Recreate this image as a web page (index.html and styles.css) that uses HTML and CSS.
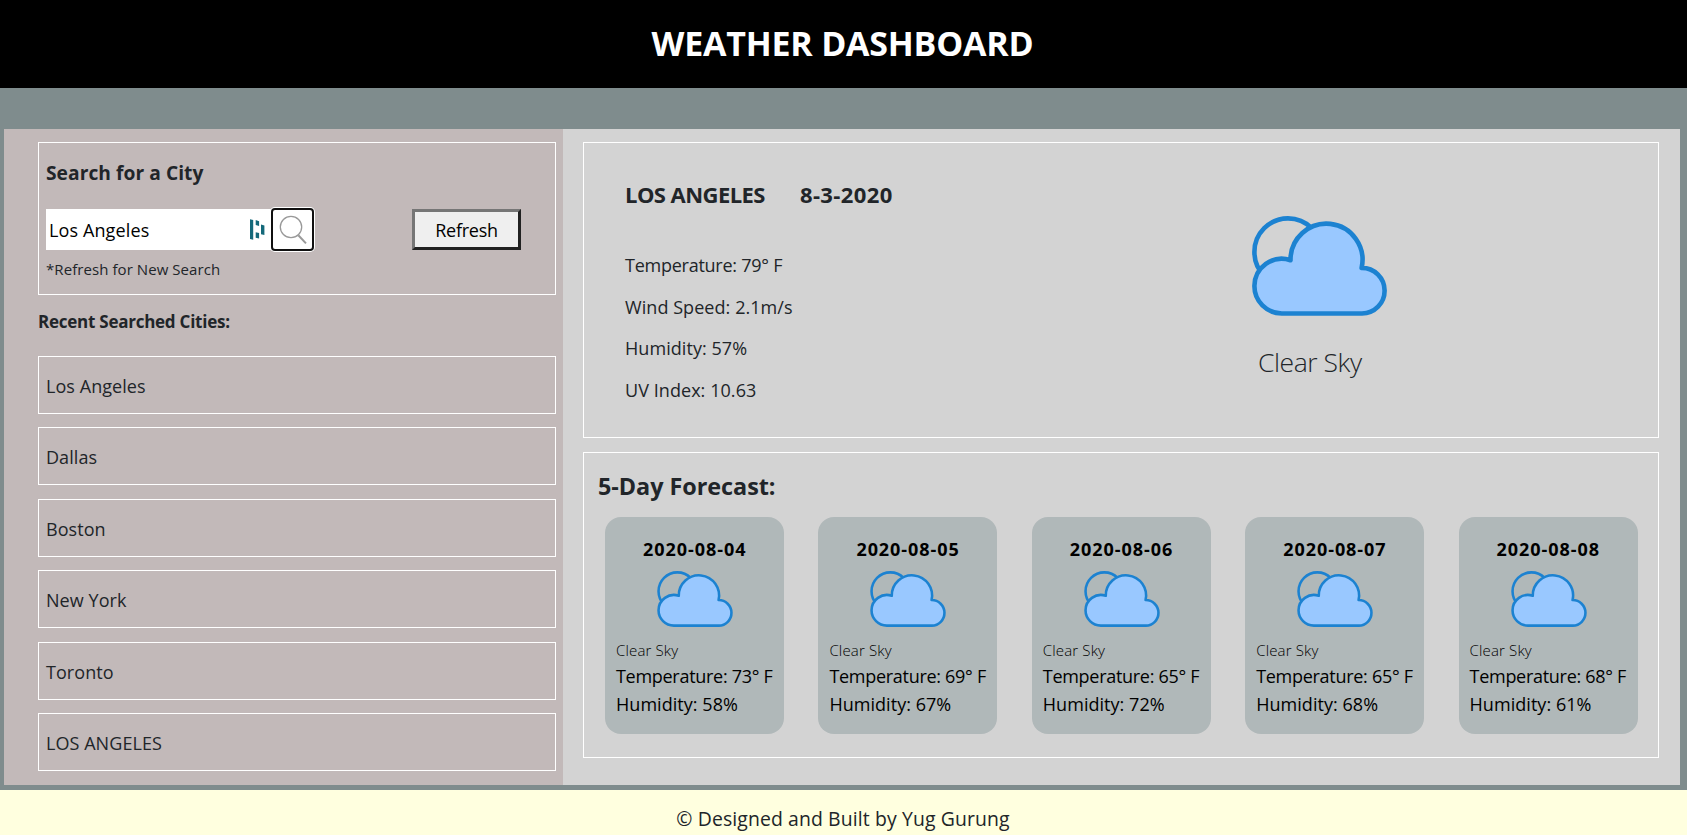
FILE: index.html
```html
<!DOCTYPE html>
<html lang="en">
<head>
<meta charset="utf-8">
<title>Weather Dashboard</title>
<link rel="stylesheet" href="styles.css">
</head>
<body>
<svg class="sprite" aria-hidden="true">
  <symbol id="cloud" viewBox="0 0 135 100">
    <circle cx="36" cy="36" r="33.6" fill="none" stroke="#1c82d1" stroke-width="4.6"/>
    <path d="M29.8 97.5A27.4 27.4 0 0 1 2.4 70.1A27.4 27.4 0 0 1 38.5 44.2A36 36.2 0 1 1 109.6 51.9A22.8 22.8 0 0 1 110 97.5Z" fill="#99c8ff" stroke="#1c82d1" stroke-width="4.6" stroke-linejoin="round"/>
  </symbol>
</svg>
<header class="header"><h1>WEATHER DASHBOARD</h1></header>
<main class="dashboard">
  <aside class="sidebar">
    <section class="search">
      <h2>Search for a City</h2>
      <div class="controls">
        <div class="field">
          <span>Los Angeles</span>
          <svg class="manager" viewBox="0 0 15 21"><path d="M0 .3 3.2 1v19.7L0 20zM5.7 1l3.4 1.2V7L5.7 6zM5.7 13.2l3.4.8v5.6l-3.4-.8zM11 5.4l3.4 1v9.6L11 15.3z" fill="#14697a"/></svg>
        </div>
        <button class="lens" aria-label="Search"><svg viewBox="0 0 32 32" fill="none" stroke="#999"><circle cx="14" cy="13" r="10.7" stroke-width="1.3"/><path d="M21.3 21.2 29 29.4" stroke-width="2"/></svg></button>
        <button class="refresh">Refresh</button>
      </div>
      <p class="hint">*Refresh for New Search</p>
    </section>
    <h3>Recent Searched Cities:</h3>
    <ul class="cities">
      <li>Los Angeles</li>
      <li>Dallas</li>
      <li>Boston</li>
      <li>New York</li>
      <li>Toronto</li>
      <li>LOS ANGELES</li>
    </ul>
  </aside>
  <div class="content">
    <section class="current">
      <div>
        <h2><span class="city">LOS ANGELES</span><span class="today">8-3-2020</span></h2>
        <p class="temp">Temperature: 79° F</p>
        <p>Wind Speed: 2.1m/s</p>
        <p>Humidity: 57%</p>
        <p>UV Index: 10.63</p>
      </div>
      <div class="sky">
        <svg class="sky-icon"><use href="#cloud"/></svg>
        <div class="sky-text">Clear Sky</div>
      </div>
    </section>
    <section class="forecast">
      <h2>5-Day Forecast:</h2>
      <div class="days">
        <article class="day"><h3>2020-08-04</h3><svg class="day-icon"><use href="#cloud"/></svg><small>Clear Sky</small><p class="temp">Temperature: 73° F</p><p>Humidity: 58%</p></article>
        <article class="day"><h3>2020-08-05</h3><svg class="day-icon"><use href="#cloud"/></svg><small>Clear Sky</small><p class="temp">Temperature: 69° F</p><p>Humidity: 67%</p></article>
        <article class="day"><h3>2020-08-06</h3><svg class="day-icon"><use href="#cloud"/></svg><small>Clear Sky</small><p class="temp">Temperature: 65° F</p><p>Humidity: 72%</p></article>
        <article class="day"><h3>2020-08-07</h3><svg class="day-icon"><use href="#cloud"/></svg><small>Clear Sky</small><p class="temp">Temperature: 65° F</p><p>Humidity: 68%</p></article>
        <article class="day"><h3>2020-08-08</h3><svg class="day-icon"><use href="#cloud"/></svg><small>Clear Sky</small><p class="temp">Temperature: 68° F</p><p>Humidity: 61%</p></article>
      </div>
    </section>
  </div>
</main>
<footer class="footer">© Designed and Built by Yug Gurung</footer>
</body>
</html>
```

FILE: styles.css
```css
* { box-sizing: border-box; }
body {
  margin: 0;
  height: 835px;
  overflow: hidden;
  background: #7f8c8d;
  color: #212529;
  font: 400 18px/28px "Open Sans", "Noto Sans", sans-serif;
}
h1, h2, h3, p, ul { margin: 0; padding: 0; }
.sprite { display: none; }

.header {
  height: 88px;
  padding: 0 2px 3px 0;
  display: flex;
  align-items: center;
  justify-content: center;
  background: #000;
  color: #fff;
}
.header h1 { font-size: 34px; line-height: 48px; letter-spacing: -.22px; }

.dashboard {
  display: grid;
  grid-template-columns: 559px 1fr;
  height: 656px;
  margin: 41px 7px 5px 4px;
}
.sidebar { padding: 13px 7px 0 34px; background: #c2b9b9; }
.search { height: 153px; padding: 15px 7px 0; border: 1px solid #fff; }
.search h2 { font-size: 19.2px; line-height: 30px; letter-spacing: .05px; }
.controls { display: flex; height: 41px; margin-top: 21px; }
.field {
  display: flex;
  align-items: center;
  justify-content: space-between;
  width: 225px;
  padding: 0 6px 0 3px;
  background: #fff;
  color: #000;
  letter-spacing: .12px;
}
.manager { width: 15px; height: 21px; }
.lens {
  width: 39px;
  height: 39px;
  margin: 1px 1px 0 2px;
  padding: 0;
  border: 0;
  border-radius: 2px;
  background: #fff;
  box-shadow: 0 0 0 2px #101010, 0 0 0 3px #fff;
}
.lens svg { display: block; width: 32px; height: 32px; margin: 0 4px; }
.refresh {
  width: 109px;
  height: 41px;
  margin-left: 99px;
  padding: 1px 0 0;
  border: 3px solid;
  border-color: #767676 #212121 #212121 #767676;
  background: #efefef;
  color: #000;
  font: inherit;
  letter-spacing: -.25px;
}
.hint { margin-top: 9px; font-size: 15px; line-height: 20px; letter-spacing: .07px; }
.sidebar h3 { margin: 15px 0 22px; font-size: 17px; line-height: 24px; letter-spacing: -.25px; }
.cities { display: grid; gap: 13.4px; list-style: none; }
.cities li { height: 58px; padding: 15px 7px 0; border: 1px solid #fff; letter-spacing: .06px; }

.content { padding: 13px 21px 0 20px; background: #d3d3d3; }
.current {
  display: grid;
  grid-template-columns: 627px 1fr;
  height: 296px;
  padding: 36px 0 0 41px;
  border: 1px solid #fff;
}
.current h2 { display: flex; gap: 35px; margin-bottom: 36px; font-size: 22px; line-height: 30px; }
.city { letter-spacing: -.55px; }
.today { letter-spacing: .4px; }
.current p { line-height: 41.6px; letter-spacing: .06px; }
.sky { padding-top: 37px; }
.sky-icon { display: block; width: 135px; height: 100px; }
.sky-text { margin: 26px 0 0 6px; font-size: 26.5px; font-weight: 300; line-height: 40px; letter-spacing: -.45px; }
.forecast { height: 306px; margin-top: 14px; padding: 15px 20px 0 21px; border: 1px solid #fff; }
.forecast h2 { margin: 0 0 13px -7px; font-size: 23.4px; line-height: 36px; letter-spacing: -.04px; }
.days { display: grid; grid-template-columns: repeat(5, 179px); column-gap: 34.4px; }
.day {
  display: flex;
  flex-direction: column;
  height: 217px;
  padding: 18px 0 0 11px;
  border-radius: 16px;
  background: #b0b8b9;
  color: #000;
}
.day h3 { margin-left: 27px; font-size: 18px; line-height: 28px; letter-spacing: .95px; }
.day-icon { width: 76px; height: 56px; margin: 8px 0 11px 41px; }
.day small { font-size: 15px; font-weight: 300; line-height: 24px; letter-spacing: .15px; }
.day p { white-space: nowrap; letter-spacing: .04px; }
.current .temp { letter-spacing: -.25px; }
.day .temp { letter-spacing: -.29px; }

.footer { height: 45px; padding: 4px 1px 0 0; background: #ffffdf; font-size: 19.4px; line-height: 49px; letter-spacing: .12px; text-align: center; }
```
